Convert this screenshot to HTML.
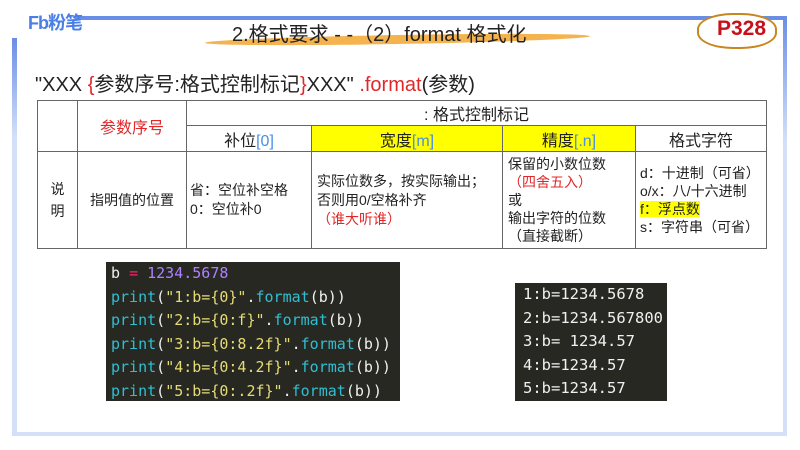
<!DOCTYPE html>
<html><head><meta charset="utf-8"><style>
*{margin:0;padding:0;box-sizing:border-box}
body{width:800px;height:450px;background:#fff;position:relative;overflow:hidden;font-family:"Liberation Sans","Noto Sans CJK SC",sans-serif;color:#222}
.abs{position:absolute}
table{border-collapse:collapse;position:absolute;left:37px;top:100px;width:730px;font-size:14px}
td{border:1px solid #666;text-align:center;vertical-align:middle}
.hd td{font-size:16px}
.y{background:#ffff00}
.b{color:#4a8fe0}
.r{color:#e0282a}
.code{background:#272822;font-family:"DejaVu Sans Mono","Liberation Mono",monospace;font-size:15px;line-height:23.6px;white-space:pre;color:#f0f0f0}
.c{color:#2fbfd3}.s{color:#e6db74}.p{color:#ae81ff}.k{color:#f92672}
</style></head><body>
<div class="abs" style="left:75px;top:16px;width:712px;height:4px;background:#6a8ee6"></div>
<div class="abs" style="left:783px;top:16px;width:4px;height:420px;background:linear-gradient(#6a8ee6,#d4e0f8 30%)"></div>
<div class="abs" style="left:12px;top:38px;width:5px;height:398px;background:linear-gradient(#6a8ee6,#d4e0f8 25%)"></div>
<div class="abs" style="left:12px;top:432px;width:775px;height:4px;background:#d4e0f8"></div>
<div class="abs" style="left:28px;top:9px;font-size:18px;font-weight:bold;color:#4a7fe6;letter-spacing:-1px">Fb粉笔</div>
<div class="abs" style="left:205px;top:35px;width:385px;height:9px;background:#f2a630;border-radius:50%;transform:rotate(-1deg);opacity:.85"></div>
<div class="abs" style="left:232px;top:18px;font-size:20px;color:#222">2.格式要求 - -（2）format 格式化</div>
<div class="abs" style="left:697px;top:13px;width:80px;height:36px;border:2px solid #c8861e;border-radius:45%;background:#fff"></div>
<div class="abs" style="left:717px;top:17px;font-size:21px;font-weight:bold;color:#c8101a">P328</div>
<div class="abs" style="left:35px;top:68px;font-size:20px;color:#222">"XXX <span class="r">{</span>参数序号:格式控制标记<span class="r">}</span>XXX" <span class="r">.format</span>(参数)</div>
<table>
<tr style="height:25px" class="hd"><td rowspan="2" style="width:40px"></td><td rowspan="2" class="r" style="width:109px">参数序号</td><td colspan="5">: 格式控制标记</td></tr>
<tr style="height:26px" class="hd"><td style="width:125px">补位<span class="b">[0]</span></td><td class="y" style="width:191px">宽度<span class="b">[m]</span></td><td class="y" style="width:133px">精度<span class="b">[.n]</span></td><td>格式字符</td></tr>
<tr style="height:97px"><td style="line-height:22px">说<br>明</td><td>指明值的位置</td><td style="text-align:left;padding-left:3px;line-height:19px">省：空位补空格<br>0：空位补0</td><td style="text-align:left;padding-left:5px;line-height:19px">实际位数多，按实际输出；<br>否则用0/空格补齐<br><span class="r">（谁大听谁）</span></td><td style="text-align:left;padding-left:5px;line-height:18px">保留的小数位数<br><span class="r">（四舍五入）</span><br>或<br>输出字符的位数<br>（直接截断）</td><td style="text-align:left;padding-left:4px;line-height:18px">d：十进制（可省）<br>o/x：八/十六进制<br><span class="y">f：浮点数</span><br>s：字符串（可省）</td></tr>
</table>
<div class="abs code" style="left:106px;top:262px;width:294px;height:139px;padding:0 5px">b <span class="k">=</span> <span class="p">1234.5678</span>
<span class="c">print</span>(<span class="s">"1:b={0}"</span>.<span class="c">format</span>(b))
<span class="c">print</span>(<span class="s">"2:b={0:f}"</span>.<span class="c">format</span>(b))
<span class="c">print</span>(<span class="s">"3:b={0:8.2f}"</span>.<span class="c">format</span>(b))
<span class="c">print</span>(<span class="s">"4:b={0:4.2f}"</span>.<span class="c">format</span>(b))
<span class="c">print</span>(<span class="s">"5:b={0:.2f}"</span>.<span class="c">format</span>(b))</div>
<div class="abs code" style="left:515px;top:283px;width:152px;height:118px;padding:0 0 0 8px;font-size:15.5px;overflow:hidden">1:b=1234.5678
2:b=1234.567800
3:b= 1234.57
4:b=1234.57
5:b=1234.57</div>
</body></html>
